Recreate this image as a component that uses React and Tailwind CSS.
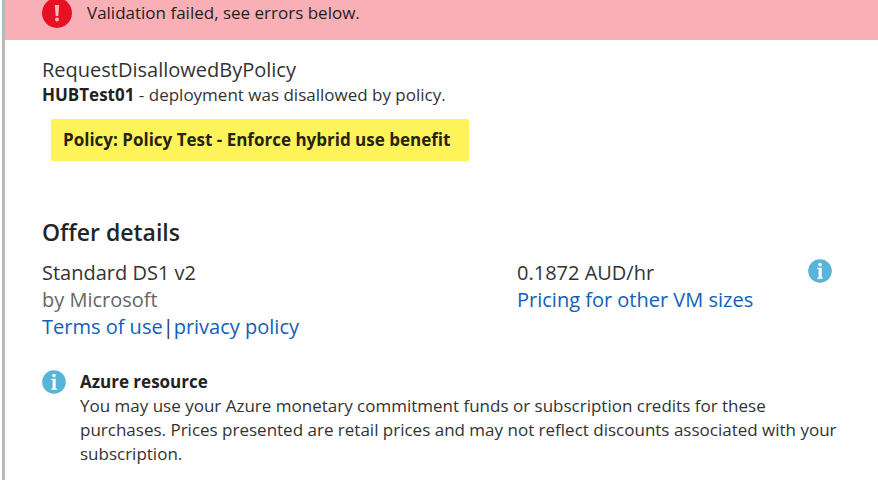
function ErrorIcon() {
  return (
    <svg viewBox="0 0 30 30" className="size-[30px] shrink-0" aria-hidden="true">
      <circle cx="15" cy="15" r="15" fill="#e81123" />
      <path d="M12.8 7h4.4l-.9 11h-2.6z" fill="#f9b9c0" />
      <circle cx="15" cy="21.6" r="2" fill="#f9b9c0" />
    </svg>
  );
}

function InfoIcon() {
  return (
    <svg viewBox="0 0 24 24" className="size-6 shrink-0" aria-hidden="true">
      <circle cx="12" cy="12" r="11.8" fill="#59b4d9" />
      <circle cx="12" cy="5.6" r="1.8" fill="#fff" />
      <path d="M9.2 8.8h4.5v9.6l1.4.3v1H9.2v-1l1.4-.3v-8.3l-1.4-.3z" fill="#fff" />
    </svg>
  );
}

function TextLink({ children }) {
  return (
    <a href="#" className="text-[#1160b7] hover:underline">
      {children}
    </a>
  );
}

export default function App() {
  return (
    <div className="flex h-screen overflow-hidden bg-white pl-[2px] font-['Open_Sans','Noto_Sans',sans-serif] text-[17px] leading-6 text-[#333333]">
      <div className="flex-1 border-l-[3px] border-[#b9b9b9]">
        <div role="alert" className="-mt-[14px] flex h-[54px] items-center gap-[15px] bg-[#f9afb6] pl-[37px] text-[#1f1f1f]">
          <ErrorIcon />
          <p>Validation failed, see errors below.</p>
        </div>

        <main className="pt-4 pr-9 pl-[37px]">
          <section>
            <p className="text-xl leading-[27px]">RequestDisallowedByPolicy</p>
            <p>
              <strong className="text-[#222222]">HUBTest01</strong> - deployment was disallowed by policy.
            </p>
            <p className="mt-3 ml-[9px] w-fit bg-[#fff35a] py-[9px] pr-[19px] pl-3 font-bold text-[#26240f]">
              Policy: Policy Test - Enforce hybrid use benefit
            </p>
          </section>

          <section className="pt-[55px]">
            <h2 className="text-[23px] leading-8 font-semibold text-[#252525]">Offer details</h2>
            <div className="mt-[11px] flex items-start pr-[10px] text-xl leading-[27px]">
              <div className="w-[475px]">
                <p>Standard DS1 v2</p>
                <p className="text-[#666666]">by Microsoft</p>
                <p className="flex">
                  <TextLink>Terms of use</TextLink>
                  <span>|</span>
                  <TextLink>privacy policy</TextLink>
                </p>
              </div>
              <div className="flex-1">
                <p>0.1872 AUD/hr</p>
                <p>
                  <TextLink>Pricing for other VM sizes</TextLink>
                </p>
              </div>
              <InfoIcon />
            </div>
          </section>

          <section className="mt-[30px] flex gap-[14px]">
            <InfoIcon />
            <div>
              <h3 className="font-bold text-[#222222]">Azure resource</h3>
              <p>
                You may use your Azure monetary commitment funds or subscription credits for these purchases.
                Prices presented are retail prices and may not reflect discounts associated with your
                subscription.
              </p>
            </div>
          </section>
        </main>
      </div>
    </div>
  );
}
